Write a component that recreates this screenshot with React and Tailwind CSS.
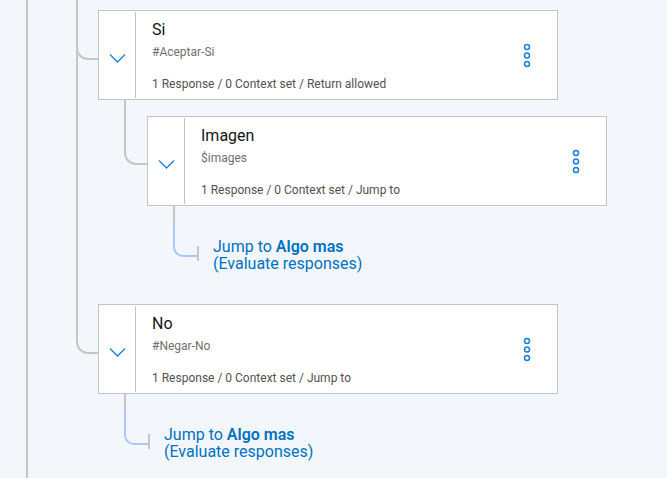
function Chevron() {
  return (
    <svg width="17" height="10" viewBox="0 0 17 10" fill="none">
      <path d="M1 1.5l7.5 7.5L16 1.5" stroke="#1a80d9" strokeWidth="1.3" />
    </svg>
  );
}

function Kebab() {
  return (
    <svg width="8" height="26" viewBox="0 0 8 26" fill="none" stroke="#1a80d9" strokeWidth="1.5">
      <circle cx="4" cy="4" r="2.5" />
      <circle cx="4" cy="12.5" r="2.5" />
      <circle cx="4" cy="21" r="2.5" />
    </svg>
  );
}

function NodeCard({ title, condition, summary }) {
  return (
    <div className="flex h-[90px] w-[460px] shrink-0 border border-[#c4c4c4] bg-white">
      <div className="flex w-[36px] shrink-0 items-center justify-center pt-[5px]">
        <Chevron />
      </div>
      <div className="my-px w-px bg-[#c4c4c4]" />
      <div className="flex-1 pl-4 pt-[9px]">
        <p className="text-[16px] leading-[20px] text-[#161616]">{title}</p>
        <p className="mt-1 text-[12px] leading-4 text-[#6f6f6f]">{condition}</p>
        <p className="mt-4 text-[12px] leading-4 text-[#525252]">{summary}</p>
      </div>
      <div className="flex w-[60px] shrink-0 items-center justify-center pt-[2px]">
        <Kebab />
      </div>
    </div>
  );
}

function JumpTo() {
  return (
    <div className="flex">
      <div className="flex w-[24px] shrink-0 flex-col">
        <div className="h-[16px] w-[2px] bg-[#c6c6c6]" />
        <div className="h-[35px] w-[24px] rounded-bl-[10px] border-b-2 border-l-2 border-[#a6c8ff]" />
      </div>
      <div className="mt-[40px] h-[15px] w-[2px] shrink-0 bg-[#c6c6c6]" />
      <div className="ml-[14px] mt-[32px] text-[16px] leading-[17px] text-[#0072c3]">
        <p>
          Jump to <span className="font-semibold">Algo mas</span>
        </p>
        <p>(Evaluate responses)</p>
      </div>
    </div>
  );
}

export default function App() {
  return (
    <div
      className="flex h-[478px] overflow-hidden bg-[#f3f6fb]"
      style={{ fontFamily: 'Roboto, "Noto Sans", sans-serif' }}
    >
      <div className="w-[26px] shrink-0" />
      <div className="w-[2px] shrink-0 bg-[#c6c6c6]" />

      <div className="ml-[48px] flex flex-col">
        {/* Si — trunk keeps going past it */}
        <div className="flex border-l-2 border-[#c6c6c6]">
          <div className="-ml-[2px] h-[60px] w-[22px] shrink-0 rounded-bl-[12px] border-b-2 border-l-2 border-[#c6c6c6]" />
          <div className="flex flex-col pb-[22px] pt-[10px]">
            <NodeCard
              title="Si"
              condition="#Aceptar-Si"
              summary="1 Response / 0 Context set / Return allowed"
            />
            <div className="ml-[26px] flex">
              <div className="h-[65px] w-[23px] shrink-0 rounded-bl-[12px] border-b-2 border-l-2 border-[#c6c6c6]" />
              <div className="flex flex-col pt-[16px]">
                <NodeCard title="Imagen" condition="$images" summary="1 Response / 0 Context set / Jump to" />
                <div className="ml-[26px]">
                  <JumpTo />
                </div>
              </div>
            </div>
          </div>
        </div>

        {/* No — last child */}
        <div className="flex">
          <div className="h-[60px] w-[22px] shrink-0 rounded-bl-[12px] border-b-2 border-l-2 border-[#c6c6c6]" />
          <div className="flex flex-col pt-[10px]">
            <NodeCard title="No" condition="#Negar-No" summary="1 Response / 0 Context set / Jump to" />
            <div className="ml-[26px]">
              <JumpTo />
            </div>
          </div>
        </div>
      </div>
    </div>
  );
}
